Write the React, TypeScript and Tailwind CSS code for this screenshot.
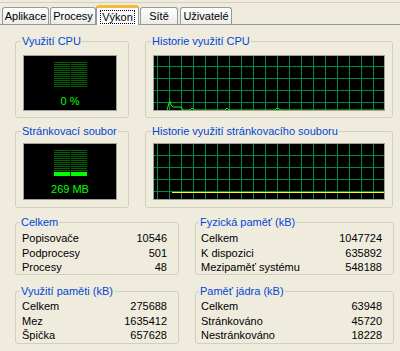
import React from "react";

const GRID = "#008A46";

function Meter({ rows, lit }: { rows: number; lit: number }) {
  const h = rows * 2;
  const lines = [];
  for (let i = 0; i < rows; i++) {
    const y = i * 2 + 0.5;
    const isLit = i >= rows - lit;
    const c = isLit ? "#00ff00" : "#006400";
    lines.push(
      <g key={i}>
        <line x1={0} y1={y} x2={16} y2={y} stroke={c} strokeWidth={1} />
        <line x1={17} y1={y} x2={33} y2={y} stroke={c} strokeWidth={1} />
        {isLit && (
          <>
            <line x1={0} y1={y + 1} x2={16} y2={y + 1} stroke="#00ff00" strokeWidth={1} />
            <line x1={17} y1={y + 1} x2={33} y2={y + 1} stroke="#00ff00" strokeWidth={1} />
          </>
        )}
      </g>
    );
  }
  return (
    <svg width={33} height={h} viewBox={`0 0 33 ${h}`} className="block">
      {lines}
    </svg>
  );
}

function Grid({ h, ys }: { h: number; ys: number[] }) {
  const xs = [];
  for (let x = 4; x < 232; x += 12) xs.push(x);
  return (
    <>
      {xs.map((x) => (
        <line key={"v" + x} x1={x + 0.5} y1={0} x2={x + 0.5} y2={h} stroke={GRID} strokeWidth={1} />
      ))}
      {ys.map((y) => (
        <line key={"h" + y} x1={0} y1={y + 0.5} x2={232} y2={y + 0.5} stroke={GRID} strokeWidth={1} />
      ))}
    </>
  );
}

function Group({
  title,
  className,
  children,
}: {
  title: string;
  className: string;
  children: React.ReactNode;
}) {
  return (
    <fieldset className={"border border-[#D0D0BF] rounded-[3px] " + className}>
      <legend className="ml-[-2px] px-[1px] text-[#0046D5] leading-[13px]">{title}</legend>
      {children}
    </fieldset>
  );
}

function Rows({ rows, pad }: { rows: [string, string][]; pad: string }) {
  return (
    <div className={"flex flex-col " + pad}>
      {rows.map(([l, v]) => (
        <div key={l} className="flex justify-between h-[14.5px] leading-[14.5px]">
          <span>{l}</span>
          <span>{v}</span>
        </div>
      ))}
    </div>
  );
}

export default function App() {
  const tabBase =
    "flex items-center justify-center border border-b-0 border-[#919B9C] rounded-t-[3px] bg-gradient-to-b from-white to-[#ECEBE6] h-[17px]";
  return (
    <div className="w-[400px] h-[351px] overflow-hidden bg-[#EFECDE] font-['Liberation_Sans',Arial,sans-serif] text-[11px] text-black">
      <div className="h-[3px] border-b border-[#D3D0C0]" />
      <div className="flex items-end h-[22px] border-b border-[#919B9C] pl-[2px]">
        <div className={tabBase + " w-[47px]"}>Aplikace</div>
        <div className={tabBase + " w-[46px] ml-[1px]"}>Procesy</div>
        <div className="flex items-center justify-center w-[43px] h-[20px] mb-[-1px] border border-b-0 border-[#919B9C] border-t-[3px] border-t-[#F5B93C] rounded-t-[3px] bg-[#FCFCFE] relative z-10">
          <span className="border border-dotted border-black px-[1px] leading-[12px]">Výkon</span>
        </div>
        <div className={tabBase + " w-[38px] ml-[1px]"}>Sítě</div>
        <div className={tabBase + " w-[52px] ml-[2px]"}>Uživatelé</div>
      </div>

      {/* Row 1 */}
      <div className="flex mt-[10px] ml-[15px]">
        <Group title="Využití CPU" className="w-[114px] h-[83px] px-[7px]">
          <div className="mt-[7px] w-[94px] h-[56px] bg-black border border-[#A0A098] flex flex-col items-center">
            <div className="mt-[6px]">
              <Meter rows={13} lit={0} />
            </div>
            <div className="mt-[7px] text-[#00FF00] leading-[13px]">0 %</div>
          </div>
        </Group>
        <Group title="Historie využití CPU" className="w-[248px] h-[83px] ml-[16px] px-[7px]">
          <div className="mt-[7px] w-[232px] h-[56px] bg-black border border-[#A0A098]">
            <svg width={230} height={54} viewBox="1 1 230 54" className="block">
              <Grid h={56} ys={[11, 23, 35, 47]} />
              <polyline
                fill="none"
                stroke="#00FF00"
                strokeWidth={1}
                points="14,55 16,48 17,46 18,50 20,52 28,52 30,55 37,55 39,53 41,55 72,55 74,53 76,55 122,55 124,53 126,54 128,55 232,55"
              />
            </svg>
          </div>
        </Group>
      </div>

      {/* Row 2 */}
      <div className="flex mt-[7px] ml-[15px]">
        <Group title="Stránkovací soubor" className="w-[114px] h-[83px] px-[7px]">
          <div className="mt-[5px] w-[94px] h-[57px] bg-black border border-[#A0A098] flex flex-col items-center">
            <div className="mt-[6px]">
              <Meter rows={13} lit={2} />
            </div>
            <div className="mt-[7px] text-[#00FF00] leading-[13px]">269 MB</div>
          </div>
        </Group>
        <Group title="Historie využití stránkovacího souboru" className="w-[248px] h-[83px] ml-[16px] px-[7px]">
          <div className="mt-[5px] w-[232px] h-[57px] bg-black border border-[#A0A098]">
            <svg width={230} height={55} viewBox="1 1 230 55" className="block">
              <Grid h={57} ys={[12, 24, 36, 48]} />
              <line x1={19} y1={49.5} x2={232} y2={49.5} stroke="#FFFF00" strokeWidth={1} />
            </svg>
          </div>
        </Group>
      </div>

      {/* Row 3 */}
      <div className="flex mt-[8px] ml-[15px]">
        <Group title="Celkem" className="w-[164px] h-[59px] px-[6px]">
          <div className="mt-[2px]">
            <Rows
              pad="pr-[5px]"
              rows={[
                ["Popisovače", "10546"],
                ["Podprocesy", "501"],
                ["Procesy", "48"],
              ]}
            />
          </div>
        </Group>
        <Group title="Fyzická paměť (kB)" className="w-[199px] h-[59px] ml-[16px] px-[5px]">
          <div className="mt-[2px]">
            <Rows
              pad="pr-[6px]"
              rows={[
                ["Celkem", "1047724"],
                ["K dispozici", "635892"],
                ["Mezipaměť systému", "548188"],
              ]}
            />
          </div>
        </Group>
      </div>

      {/* Row 4 */}
      <div className="flex mt-[10px] ml-[15px]">
        <Group title="Využití paměti (kB)" className="w-[164px] h-[59px] px-[6px]">
          <div className="mt-[1px]">
            <Rows
              pad="pr-[5px]"
              rows={[
                ["Celkem", "275688"],
                ["Mez", "1635412"],
                ["Špička", "657628"],
              ]}
            />
          </div>
        </Group>
        <Group title="Paměť jádra (kB)" className="w-[199px] h-[59px] ml-[16px] px-[5px]">
          <div className="mt-[1px]">
            <Rows
              pad="pr-[6px]"
              rows={[
                ["Celkem", "63948"],
                ["Stránkováno", "45720"],
                ["Nestránkováno", "18228"],
              ]}
            />
          </div>
        </Group>
      </div>
    </div>
  );
}
